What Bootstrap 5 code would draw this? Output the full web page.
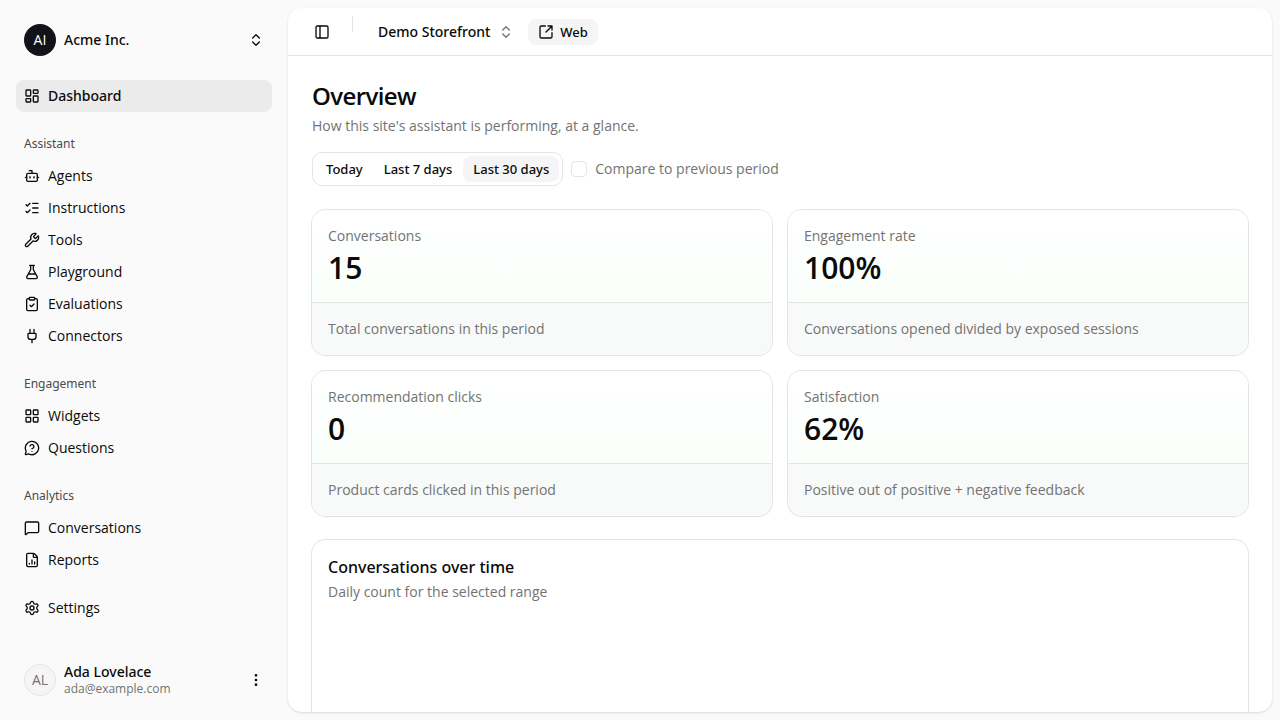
<!DOCTYPE html>
<html lang="en">
<head>
<meta charset="utf-8">
<meta name="viewport" content="width=device-width, initial-scale=1">
<title>Overview · Acme Inc.</title>
<link href="https://cdn.jsdelivr.net/npm/bootstrap@5.3.0/dist/css/bootstrap.min.css" rel="stylesheet">
<style>
  :root { --ink: #0a0a0a; --muted: #737373; --line: #e5e5e5; --soft: #f5f5f5; --shell: #fafafa; }
  body { font-family: "Open Sans", "Noto Sans", sans-serif; font-size: 14px; line-height: 20px; color: var(--ink); background: var(--shell); }
  button { color: inherit; }
  .icon { width: 16px; height: 16px; flex: none; fill: none; stroke: currentColor; stroke-width: 2; stroke-linecap: round; stroke-linejoin: round; }
  /* Noto Sans carries the medium cut that Open Sans lacks */
  .medium, .side-link.active, .small-btn, .tile-title { font-family: "Noto Sans", "Open Sans", sans-serif; font-weight: 500; }
  .muted { color: var(--muted); }
  .plain-btn { border: 0; background: transparent; padding: 0; text-align: left; }

  /* Sidebar */
  .sidebar { width: 288px; flex: none; }
  .account { height: 48px; padding: 8px; gap: 8px; }
  .avatar { width: 32px; height: 32px; flex: none; border-radius: 50%; }
  .avatar-dark { background: #121217; color: #fff; }
  .avatar-light { background: var(--soft); color: var(--muted); border: 1px solid var(--line); }
  .side-label { height: 32px; padding: 0 8px; font-family: "Noto Sans", "Open Sans", sans-serif; font-size: 12px; line-height: 16px; color: #4a4a4a; }
  .side-link { height: 32px; padding: 0 8px; gap: 8px; border-radius: 8px; color: var(--ink); }
  .side-link:hover, .side-link.active { background: #ebebeb; }
  .account small { font-size: 12px; line-height: 16px; }
  .account-name { line-height: 18px; }

  /* Main panel */
  .panel { border-radius: 14px; background: #fff; box-shadow: 0 1px 3px rgba(0,0,0,.1), 0 1px 2px -1px rgba(0,0,0,.1); }
  .topbar { height: 48px; flex: none; padding: 0 20px; border-bottom: 1px solid var(--line); }
  .square-btn { width: 28px; height: 28px; }
  .divider { width: 1px; height: 16px; margin: 8px 17px 0 16px; background: var(--line); }
  .site-btn { height: 32px; padding: 0 6px 0 8px; gap: 8px; }
  .small-btn { height: 26px; padding: 0 10px; gap: 6px; border-radius: 8px; font-size: 13px; color: var(--ink); }
  .small-btn.filled { background: var(--soft); }
  .page-title { font-size: 24px; line-height: 32px; font-weight: 600; letter-spacing: -0.6px; }
  .range-group { padding: 3px; gap: 1px; border: 1px solid var(--line); border-radius: 10px; }
  .form-check-input.tick { width: 16px; height: 16px; margin: 0; border-color: var(--line); border-radius: 4px; }

  .metric-grid { display: grid; grid-template-columns: repeat(2, minmax(0, 1fr)); gap: 16px; }
  .tile { border-radius: 14px; overflow: hidden; box-shadow: 0 0 0 1px #e5e5e5; background: #fff; }
  .metric { box-shadow: 0 0 0 1px #e4e4e4, 0 1px 2px rgba(0,0,0,.05); }
  .metric-top { background: linear-gradient(to top, #fafffb, #fff); }
  .metric-value { font-size: 30px; line-height: 36px; font-weight: 600; }
  .metric-note { background: #f8faf9; border-top: 1px solid var(--line); }
  .tile-title { font-size: 16px; line-height: 22px; }
  .plot { height: 256px; }
</style>
</head>
<body>
<svg class="d-none" aria-hidden="true">
  <symbol id="i-dashboard" viewBox="0 0 24 24"><rect width="7" height="9" x="3" y="3" rx="1"/><rect width="7" height="5" x="14" y="3" rx="1"/><rect width="7" height="9" x="14" y="12" rx="1"/><rect width="7" height="5" x="3" y="16" rx="1"/></symbol>
  <symbol id="i-bot" viewBox="0 0 24 24"><path d="M12 8V4H8"/><rect width="16" height="12" x="4" y="8" rx="2"/><path d="M2 14h2M20 14h2M15 13v2M9 13v2"/></symbol>
  <symbol id="i-list" viewBox="0 0 24 24"><path d="M13 5h8M13 12h8M13 19h8M3 17l2 2 4-4M3 7l2 2 4-4"/></symbol>
  <symbol id="i-wrench" viewBox="0 0 24 24"><path d="M14.7 6.3a1 1 0 0 0 0 1.4l1.6 1.6a1 1 0 0 0 1.4 0l3.106-3.105c.32-.322.863-.22.983.218a6 6 0 0 1-8.259 7.057l-7.91 7.91a1 1 0 0 1-2.999-3l7.91-7.91a6 6 0 0 1 7.057-8.259c.438.12.54.662.219.984z"/></symbol>
  <symbol id="i-flask" viewBox="0 0 24 24"><path d="M14 2v6a2 2 0 0 0 .245.96l5.51 10.08A2 2 0 0 1 18 22H6a2 2 0 0 1-1.755-2.96l5.51-10.08A2 2 0 0 0 10 8V2M6.453 15h11.094M8.5 2h7"/></symbol>
  <symbol id="i-clipboard" viewBox="0 0 24 24"><rect width="8" height="4" x="8" y="2" rx="1"/><path d="M16 4h2a2 2 0 0 1 2 2v14a2 2 0 0 1-2 2H6a2 2 0 0 1-2-2V6a2 2 0 0 1 2-2h2M9 14l2 2 4-4"/></symbol>
  <symbol id="i-plug" viewBox="0 0 24 24"><path d="M12 22v-5M15 8V2M17 8a1 1 0 0 1 1 1v4a4 4 0 0 1-4 4h-4a4 4 0 0 1-4-4V9a1 1 0 0 1 1-1zM9 8V2"/></symbol>
  <symbol id="i-grid" viewBox="0 0 24 24"><rect width="7" height="7" x="3" y="3" rx="1"/><rect width="7" height="7" x="14" y="3" rx="1"/><rect width="7" height="7" x="14" y="14" rx="1"/><rect width="7" height="7" x="3" y="14" rx="1"/></symbol>
  <symbol id="i-question" viewBox="0 0 24 24"><path d="M2.992 16.342a2 2 0 0 1 .094 1.167l-1.065 3.29a1 1 0 0 0 1.236 1.168l3.413-.998a2 2 0 0 1 1.099.092 10 10 0 1 0-4.777-4.719M9.09 9a3 3 0 0 1 5.83 1c0 2-3 3-3 3M12 17h.01"/></symbol>
  <symbol id="i-message" viewBox="0 0 24 24"><path d="M22 17a2 2 0 0 1-2 2H6.828a2 2 0 0 0-1.414.586l-2.202 2.202A.71.71 0 0 1 2 21.286V5a2 2 0 0 1 2-2h16a2 2 0 0 1 2 2z"/></symbol>
  <symbol id="i-report" viewBox="0 0 24 24"><path d="M6 22a2 2 0 0 1-2-2V4a2 2 0 0 1 2-2h8a2.4 2.4 0 0 1 1.704.706l3.588 3.588A2.4 2.4 0 0 1 20 8v12a2 2 0 0 1-2 2zM14 2v5a1 1 0 0 0 1 1h5M8 18v-1M12 18v-6M16 18v-3"/></symbol>
  <symbol id="i-settings" viewBox="0 0 24 24"><path d="M9.671 4.136a2.34 2.34 0 0 1 4.659 0 2.34 2.34 0 0 0 3.319 1.915 2.34 2.34 0 0 1 2.33 4.033 2.34 2.34 0 0 0 0 3.831 2.34 2.34 0 0 1-2.33 4.033 2.34 2.34 0 0 0-3.319 1.915 2.34 2.34 0 0 1-4.659 0 2.34 2.34 0 0 0-3.32-1.915 2.34 2.34 0 0 1-2.33-4.033 2.34 2.34 0 0 0 0-3.831A2.34 2.34 0 0 1 6.35 6.051a2.34 2.34 0 0 0 3.319-1.915"/><circle cx="12" cy="12" r="3"/></symbol>
  <symbol id="i-updown" viewBox="0 0 24 24"><path d="M7 15l5 5 5-5M7 9l5-5 5 5"/></symbol>
  <symbol id="i-panel" viewBox="0 0 24 24"><rect width="18" height="18" x="3" y="3" rx="2"/><path d="M9 3v18"/></symbol>
  <symbol id="i-external" viewBox="0 0 24 24"><path d="M21 13v6a2 2 0 0 1-2 2H5a2 2 0 0 1-2-2V5a2 2 0 0 1 2-2h6M21 3l-9 9M15 3h6v6"/></symbol>
  <symbol id="i-dots" viewBox="0 0 24 24"><circle cx="12" cy="12" r="1"/><circle cx="12" cy="5" r="1"/><circle cx="12" cy="19" r="1"/></symbol>
</svg>

<div class="d-flex vh-100 overflow-hidden">
  <aside class="sidebar d-flex flex-column p-3">
    <button type="button" class="plain-btn account d-flex align-items-center w-100 mb-3">
      <span class="avatar avatar-dark d-flex align-items-center justify-content-center">AI</span>
      <span class="flex-grow-1 medium">Acme Inc.</span>
      <svg class="icon"><use href="#i-updown"/></svg>
    </button>

    <nav class="d-flex flex-column gap-3 flex-grow-1" aria-label="Main">
      <a class="side-link active d-flex align-items-center text-decoration-none" href="#" aria-current="page"><svg class="icon"><use href="#i-dashboard"/></svg>Dashboard</a>
      <div>
        <div class="side-label d-flex align-items-center">Assistant</div>
        <a class="side-link d-flex align-items-center text-decoration-none" href="#"><svg class="icon"><use href="#i-bot"/></svg>Agents</a>
        <a class="side-link d-flex align-items-center text-decoration-none" href="#"><svg class="icon"><use href="#i-list"/></svg>Instructions</a>
        <a class="side-link d-flex align-items-center text-decoration-none" href="#"><svg class="icon"><use href="#i-wrench"/></svg>Tools</a>
        <a class="side-link d-flex align-items-center text-decoration-none" href="#"><svg class="icon"><use href="#i-flask"/></svg>Playground</a>
        <a class="side-link d-flex align-items-center text-decoration-none" href="#"><svg class="icon"><use href="#i-clipboard"/></svg>Evaluations</a>
        <a class="side-link d-flex align-items-center text-decoration-none" href="#"><svg class="icon"><use href="#i-plug"/></svg>Connectors</a>
      </div>
      <div>
        <div class="side-label d-flex align-items-center">Engagement</div>
        <a class="side-link d-flex align-items-center text-decoration-none" href="#"><svg class="icon"><use href="#i-grid"/></svg>Widgets</a>
        <a class="side-link d-flex align-items-center text-decoration-none" href="#"><svg class="icon"><use href="#i-question"/></svg>Questions</a>
      </div>
      <div>
        <div class="side-label d-flex align-items-center">Analytics</div>
        <a class="side-link d-flex align-items-center text-decoration-none" href="#"><svg class="icon"><use href="#i-message"/></svg>Conversations</a>
        <a class="side-link d-flex align-items-center text-decoration-none" href="#"><svg class="icon"><use href="#i-report"/></svg>Reports</a>
      </div>
      <a class="side-link d-flex align-items-center text-decoration-none" href="#"><svg class="icon"><use href="#i-settings"/></svg>Settings</a>
    </nav>

    <button type="button" class="plain-btn account d-flex align-items-center w-100">
      <span class="avatar avatar-light d-flex align-items-center justify-content-center">AL</span>
      <span class="flex-grow-1 d-flex flex-column">
        <span class="account-name medium">Ada Lovelace</span>
        <small class="muted">ada@example.com</small>
      </span>
      <svg class="icon"><use href="#i-dots"/></svg>
    </button>
  </aside>

  <main class="panel flex-grow-1 d-flex flex-column overflow-hidden my-2 me-2">
    <header class="topbar d-flex align-items-center">
      <button type="button" class="plain-btn square-btn d-flex align-items-center justify-content-center" aria-label="Toggle sidebar"><svg class="icon"><use href="#i-panel"/></svg></button>
      <span class="divider align-self-start"></span>
      <button type="button" class="plain-btn site-btn d-flex align-items-center medium me-2">Demo Storefront <svg class="icon muted"><use href="#i-updown"/></svg></button>
      <a class="small-btn filled d-flex align-items-center text-decoration-none" href="#"><svg class="icon"><use href="#i-external"/></svg>Web</a>
    </header>

    <div class="p-4 d-flex flex-column gap-4">
      <section class="d-flex flex-column gap-3">
        <div class="d-flex flex-column gap-1">
          <h1 class="page-title m-0">Overview</h1>
          <p class="muted m-0">How this site's assistant is performing, at a glance.</p>
        </div>
        <div class="d-flex align-items-center gap-2">
          <div class="range-group d-flex" role="group" aria-label="Date range">
            <button type="button" class="plain-btn small-btn">Today</button>
            <button type="button" class="plain-btn small-btn">Last 7 days</button>
            <button type="button" class="plain-btn small-btn filled" aria-pressed="true">Last 30 days</button>
          </div>
          <input class="form-check-input tick" type="checkbox" id="compare">
          <label class="muted" for="compare">Compare to previous period</label>
        </div>
      </section>

      <section class="metric-grid">
        <article class="tile metric">
          <div class="metric-top p-3"><div class="muted mb-1">Conversations</div><div class="metric-value">15</div></div>
          <div class="metric-note muted p-3">Total conversations in this period</div>
        </article>
        <article class="tile metric">
          <div class="metric-top p-3"><div class="muted mb-1">Engagement rate</div><div class="metric-value">100%</div></div>
          <div class="metric-note muted p-3">Conversations opened divided by exposed sessions</div>
        </article>
        <article class="tile metric">
          <div class="metric-top p-3"><div class="muted mb-1">Recommendation clicks</div><div class="metric-value">0</div></div>
          <div class="metric-note muted p-3">Product cards clicked in this period</div>
        </article>
        <article class="tile metric">
          <div class="metric-top p-3"><div class="muted mb-1">Satisfaction</div><div class="metric-value">62%</div></div>
          <div class="metric-note muted p-3">Positive out of positive + negative feedback</div>
        </article>
      </section>

      <section class="tile flex-shrink-0 p-3">
        <h2 class="tile-title mb-1">Conversations over time</h2>
        <p class="muted m-0">Daily count for the selected range</p>
        <div class="plot"></div>
      </section>
    </div>
  </main>
</div>
<script src="https://cdn.jsdelivr.net/npm/bootstrap@5.3.0/dist/js/bootstrap.bundle.min.js"></script>
</body>
</html>
